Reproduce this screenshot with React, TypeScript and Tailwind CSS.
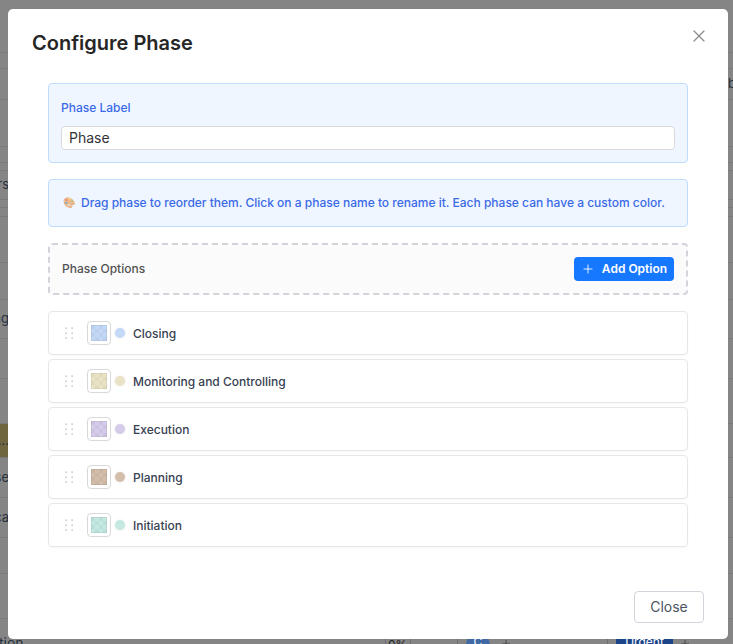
import { Plus, X } from "lucide-react";

const phases = [
  { name: "Closing", color: "#c4d9f8" },
  { name: "Monitoring and Controlling", color: "#ebe3c6" },
  { name: "Execution", color: "#d5cbea" },
  { name: "Planning", color: "#d3bdab" },
  { name: "Initiation", color: "#c4e8e2" },
];

// Page that sits dimmed behind the dialog
const backRows: { h: number; left?: string; right?: string; band?: boolean }[] = [
  { h: 53 },
  { h: 16 },
  { h: 31, right: "b" },
  { h: 47 },
  { h: 16 },
  { h: 8 },
  { h: 29, left: "rs" },
  { h: 8 },
  { h: 9 },
  { h: 46 },
  { h: 37 },
  { h: 39, left: "ng" },
  { h: 40 },
  { h: 45 },
  { h: 34, left: "...", band: true },
  { h: 40, left: "se" },
  { h: 40, left: "ca" },
  { h: 36 },
  { h: 45 },
];

function Backdrop() {
  return (
    <div className="flex h-[644px] w-[733px] flex-col overflow-hidden text-[13px] text-[#26303d]">
      {backRows.map((r, i) => (
        <div
          key={i}
          className="flex shrink-0 items-stretch justify-between border-b border-[#7a7a7a] bg-[#858585]"
          style={{ height: r.h }}
        >
          <span className={`flex w-[9px] items-center justify-end overflow-hidden whitespace-nowrap ${r.band ? "bg-[#6f663f]" : ""}`}>{r.left}</span>
          <span className="flex w-[5px] items-center overflow-hidden">{r.right}</span>
        </div>
      ))}
    </div>
  );
}

function BottomRow() {
  return (
    <div className="absolute left-0 top-[630px] h-[14px] w-[733px] overflow-hidden text-[12px] leading-[16px] text-[#222]">
      <span className="absolute left-[-1px] top-[3px] text-[14px] leading-5 text-[#26303d]">tion</span>
      <span className="absolute left-[385px] top-0 h-full w-px bg-[#6f6f6f]" />
      <span className="absolute left-[388px] top-[7px]">0%</span>
      <span className="absolute left-[410px] top-0 h-full w-px bg-[#6f6f6f]" />
      <span className="absolute left-[457px] top-0 h-full w-px bg-[#6f6f6f]" />
      <span className="absolute left-[466px] top-[3px] flex h-6 w-6 justify-center rounded-full bg-[#3f6aa5] pt-[1px] text-white">C</span>
      <Plus className="absolute left-[500px] top-[8px] h-3 w-3 text-[#333]" strokeWidth={1.5} />
      <span className="absolute left-[607px] top-0 h-full w-px bg-[#6f6f6f]" />
      <span className="absolute left-[616px] top-0 flex h-6 w-[57px] items-center justify-center bg-[#1c4587] text-white">Urgent</span>
      <Plus className="absolute left-[679px] top-[8px] h-3 w-3 text-[#333]" strokeWidth={1.5} />
    </div>
  );
}

function Grip() {
  return (
    <svg width="10" height="12" viewBox="0 0 10 12" className="text-[#9ca3af]" fill="currentColor">
      {[1, 6, 11].flatMap((y) =>
        [2, 8].map((x) => <rect key={`${x}-${y}`} x={x - 0.5} y={y - 0.5} width="1.2" height="1.2" />)
      )}
    </svg>
  );
}

function Swatch({ color }: { color: string }) {
  return (
    <div className="flex h-6 w-6 items-center justify-center rounded border border-[#d9d9d9] bg-white">
      <svg width="16" height="16" viewBox="0 0 16 16">
        <rect width="16" height="16" fill={color} />
        {[0, 1, 2, 3].flatMap((r) =>
          [0, 1, 2, 3].map((c) =>
            (r + c) % 2 === 0 ? <rect key={`${r}-${c}`} x={c * 4} y={r * 4} width="4" height="4" fill="#000" opacity="0.035" /> : null
          )
        )}
        <rect x="0.5" y="0.5" width="15" height="15" fill="none" stroke="#000" strokeOpacity="0.06" />
      </svg>
    </div>
  );
}

export default function App() {
  return (
    <div className="relative h-[644px] w-[733px] overflow-hidden bg-[#858585] font-['Inter',sans-serif]">
      <Backdrop />
      <BottomRow />
      <div className="absolute left-[8px] top-[9px] flex h-[630px] w-[720px] flex-col rounded-[5px] bg-white">
        <div className="flex items-start justify-between pl-6 pr-5 pt-[19px]">
          <h2 className="text-[20px] font-semibold leading-[30px] text-[#262626]">Configure Phase</h2>
          <X className="mt-[-2px] mr-[-1px] h-[20px] w-[20px] text-[#8c8c8c]" strokeWidth={1.5} />
        </div>

        <div className="mt-[25px] flex flex-col px-10">
          <div className="h-[80px] rounded border border-[#bfdbfe] bg-[#eff6ff] px-3 pt-[15px]">
            <div className="text-xs font-medium leading-[18px] text-[#3b6ae8]">Phase Label</div>
            <div className="mt-[9px] flex h-6 items-center rounded border border-[#d9d9d9] bg-white px-[7px] text-sm leading-[22px] text-[#333]">Phase</div>
          </div>

          <div className="mt-4 flex h-12 items-center rounded border border-[#bfdbfe] bg-[#eff6ff] pl-[14px] text-xs font-medium text-[#3b6ae8]">
            <span className="w-[18px] text-[10px] opacity-70">🎨</span>
            <span>Drag phase to reorder them. Click on a phase name to rename it. Each phase can have a custom color.</span>
          </div>

          <div className="mt-4 flex h-[52px] items-center justify-between rounded border-2 border-dashed border-[#d1d5db] bg-[#fbfbfb] pl-3 pr-3">
            <span className="text-xs font-medium text-[#525252]">Phase Options</span>
            <button className="flex h-6 w-[100px] items-center justify-center gap-[7px] rounded bg-[#1677ff] text-xs font-semibold text-white">
              <Plus className="h-[14px] w-[14px]" strokeWidth={1.5} />
              Add Option
            </button>
          </div>

          <div className="mt-4 flex flex-col gap-1">
            {phases.map((p) => (
              <div key={p.name} className="flex h-11 items-center rounded border border-[#e5e7eb] bg-white pl-[15px] shadow-[0_1px_2px_rgba(0,0,0,0.04)]">
                <Grip />
                <div className="ml-[13px]">
                  <Swatch color={p.color} />
                </div>
                <span className="ml-1 h-[10px] w-[10px] rounded-full shadow-[0_0_0_1px_rgba(0,0,0,0.04)]" style={{ backgroundColor: p.color }} />
                <span className="ml-2 pt-[2px] text-xs font-medium text-[#374151]">{p.name}</span>
              </div>
            ))}
          </div>
        </div>

        <div className="mt-auto flex justify-end pb-[16px] pr-6">
          <button className="h-8 w-[70px] rounded border border-[#d1d5db] bg-white text-sm text-[#4b5563]">Close</button>
        </div>
      </div>
    </div>
  );
}
